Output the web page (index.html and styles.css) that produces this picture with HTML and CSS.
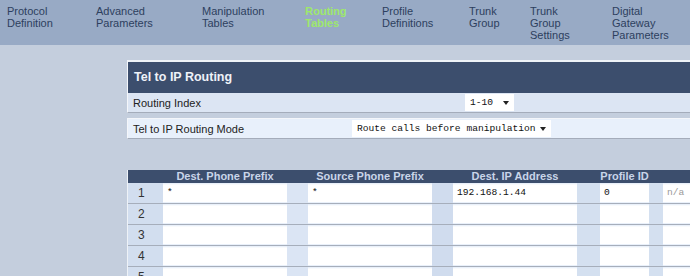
FILE: index.html
```html
<!DOCTYPE html>
<html lang="en">
<head>
    <meta charset="UTF-8">
    <title>Tel to IP Routing</title>
    <link rel="stylesheet" href="styles.css">
</head>
<body>
    <nav class="menu">
        <a class="menu-item">Protocol<br>Definition</a>
        <a class="menu-item">Advanced<br>Parameters</a>
        <a class="menu-item">Manipulation<br>Tables</a>
        <a class="menu-item active">Routing<br>Tables</a>
        <a class="menu-item">Profile<br>Definitions</a>
        <a class="menu-item">Trunk<br>Group</a>
        <a class="menu-item">Trunk<br>Group<br>Settings</a>
        <a class="menu-item">Digital<br>Gateway<br>Parameters</a>
    </nav>

    <main class="content">
        <section class="panel">
            <h1 class="panel-title">Tel to IP Routing</h1>
            <div class="param param-index">
                <span class="param-label">Routing Index</span>
                <div class="select select-small">1-10 <span class="arrow"></span></div>
            </div>
            <div class="param param-mode">
                <span class="param-label">Tel to IP Routing Mode</span>
                <div class="select select-wide">Route calls before manipulation <span class="arrow"></span></div>
            </div>
        </section>

        <section class="routes">
            <div class="route-row route-head">
                <span class="num"></span>
                <span class="head">Dest. Phone Prefix</span>
                <span class="gap g1"></span>
                <span class="head">Source Phone Prefix</span>
                <span class="gap g2"></span>
                <span class="head">Dest. IP Address</span>
                <span class="gap g3"></span>
                <span class="head">Profile ID</span>
                <span class="gap g4"></span>
                <span class="head"></span>
            </div>
            <div class="route-row">
                <span class="num">1</span>
                <span class="field">*</span>
                <span class="gap g1"></span>
                <span class="field">*</span>
                <span class="gap g2"></span>
                <span class="field">192.168.1.44</span>
                <span class="gap g3"></span>
                <span class="field">0</span>
                <span class="gap g4"></span>
                <span class="field muted">n/a</span>
            </div>
            <div class="route-row">
                <span class="num">2</span>
                <span class="field"></span>
                <span class="gap g1"></span>
                <span class="field"></span>
                <span class="gap g2"></span>
                <span class="field"></span>
                <span class="gap g3"></span>
                <span class="field"></span>
                <span class="gap g4"></span>
                <span class="field"></span>
            </div>
            <div class="route-row">
                <span class="num">3</span>
                <span class="field"></span>
                <span class="gap g1"></span>
                <span class="field"></span>
                <span class="gap g2"></span>
                <span class="field"></span>
                <span class="gap g3"></span>
                <span class="field"></span>
                <span class="gap g4"></span>
                <span class="field"></span>
            </div>
            <div class="route-row">
                <span class="num">4</span>
                <span class="field"></span>
                <span class="gap g1"></span>
                <span class="field"></span>
                <span class="gap g2"></span>
                <span class="field"></span>
                <span class="gap g3"></span>
                <span class="field"></span>
                <span class="gap g4"></span>
                <span class="field"></span>
            </div>
            <div class="route-row">
                <span class="num">5</span>
                <span class="field"></span>
                <span class="gap g1"></span>
                <span class="field"></span>
                <span class="gap g2"></span>
                <span class="field"></span>
                <span class="gap g3"></span>
                <span class="field"></span>
                <span class="gap g4"></span>
                <span class="field"></span>
            </div>
        </section>
    </main>
</body>
</html>
```

FILE: styles.css
```css
body {
    margin: 0;
    background-color: #c4cedd;
    font-family: "Liberation Sans", Arial, sans-serif;
    color: #222;
    overflow: hidden;
}

.menu {
    display: grid;
    grid-template-columns: 89px 106px 103px 77px 87px 61px 82px 1fr;
    height: 45px;
    box-sizing: border-box;
    padding: 5px 0 0 7px;
    background-color: #98aac5;
}

.menu-item {
    font-size: 11px;
    line-height: 12px;
    color: #2d3f5e;
}

.menu-item.active {
    color: #9ee86c;
    font-weight: bold;
}

.content {
    padding: 15px 0 0 127px;
}

.panel {
    width: 563px;
}

.panel-title {
    margin: 0;
    height: 31px;
    border-top: 2px solid #eef2f7;
    border-left: 1px solid #f4f6fa;
    padding-left: 6px;
    background-color: #3c4e6d;
    color: #eef2f8;
    font-size: 12.5px;
    line-height: 31px;
}

.param {
    display: grid;
    align-items: center;
    border-left: 1px solid #f4f6fa;
    border-bottom: 1px solid #a4acba;
    font-size: 11px;
}

.param-label {
    padding-left: 5px;
}

.param-index {
    grid-template-columns: 337px auto;
    height: 19px;
    background-color: #dce5f3;
}

.param-mode {
    grid-template-columns: 224px auto;
    height: 19px;
    margin-top: 5px;
    border-top: 1px solid #f4f6fa;
    background-color: #e8f0fb;
}

.select {
    display: flex;
    align-items: center;
    justify-content: space-between;
    box-sizing: border-box;
    height: 17px;
    padding: 0 5px;
    background-color: #fff;
    font-family: "Liberation Mono", "Courier New", monospace;
    font-size: 9.6px;
    color: #111;
}

.select-small {
    width: 49px;
}

.select-wide {
    width: 199px;
}

.arrow {
    width: 0;
    height: 0;
    border-left: 3px solid transparent;
    border-right: 3px solid transparent;
    border-top: 4px solid #222;
}

.routes {
    margin-top: 31px;
    width: 600px;
    border-left: 1px solid #eef2f7;
}

.route-row {
    display: grid;
    grid-template-columns: 35px 124px 21px 124px 21px 124px 23px 49px 14px 64px;
    box-sizing: border-box;
    height: 21px;
    border-bottom: 1px solid #a6aebb;
    background-color: #e9f0fa;
}

.route-head {
    height: 13px;
    border-bottom: none;
    background-color: #3c4e6d;
}

.head {
    display: flex;
    justify-content: center;
    white-space: nowrap;
    font-size: 11px;
    font-weight: bold;
    line-height: 13px;
    color: #c9d5e9;
}

.num {
    padding-left: 10px;
    background-color: #d2deef;
    font-size: 12px;
    line-height: 20px;
    color: #333;
}

.route-head .num {
    background-color: transparent;
}

.field {
    box-sizing: border-box;
    height: 18px;
    margin-top: 1px;
    padding-left: 4px;
    background-color: #fff;
    border-top: 1px solid #f8fafc;
    font-family: "Liberation Mono", "Courier New", monospace;
    font-size: 9.6px;
    line-height: 16px;
    color: #111;
}

.field.muted {
    color: #999;
}

.gap.g1 {
    background-color: #dbe5f4;
}

.gap.g2 {
    background-color: #d0dcee;
}

.gap.g3 {
    background-color: #d4e0f0;
}

.gap.g4 {
    background-color: #d4e0f0;
}

.route-head .gap {
    background-color: transparent;
}
```
